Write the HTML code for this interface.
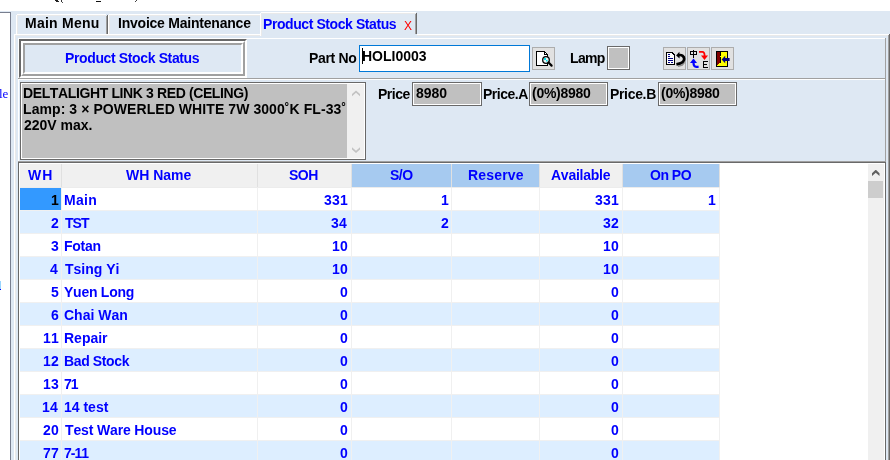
<!DOCTYPE html>
<html><head><meta charset="utf-8"><title>Product Stock Status</title>
<style>
html,body{margin:0;padding:0;}
body{width:890px;height:460px;background:#fff;position:relative;overflow:hidden;font-family:"Liberation Sans",sans-serif;}
.t{position:absolute;white-space:pre;line-height:16px;height:16px;font-kerning:none;will-change:transform;}
svg{position:absolute;overflow:visible;}
</style></head><body>

<div style="position:absolute;left:0px;top:11px;width:890px;height:1px;background:#dee8f3;"></div>
<div style="position:absolute;left:11px;top:12px;width:879px;height:448px;background:#dee8f3;"></div>
<div style="position:absolute;left:0px;top:12px;width:11px;height:1px;background:#787e8e;"></div>
<div style="position:absolute;left:10px;top:12px;width:1px;height:448px;background:#787e8e;"></div>
<div style="position:absolute;left:55px;top:0px;width:3px;height:1px;background:#222;"></div>
<div style="position:absolute;left:56px;top:1px;width:3px;height:1px;background:#222;"></div>
<div style="position:absolute;left:61px;top:0px;width:1px;height:2px;background:#333;"></div>
<div style="position:absolute;left:62px;top:2px;width:1px;height:1px;background:#555;"></div>
<div style="position:absolute;left:96px;top:1px;width:5px;height:1px;background:#111;"></div>
<div style="position:absolute;left:136px;top:0px;width:1px;height:1px;background:#444;"></div>
<div style="position:absolute;left:135px;top:1px;width:1px;height:1px;background:#444;"></div>
<div id="le" class="t" style="left:-1px;top:86px;color:#0000ff;font-size:13px;font-weight:normal;font-family:'Liberation Serif',sans-serif;letter-spacing:0px;">le</div>
<div style="position:absolute;left:0px;top:281px;width:1px;height:8px;background:#99d6ff;"></div>
<div style="position:absolute;left:0px;top:289px;width:1px;height:1px;background:#0000ff;"></div>
<div style="position:absolute;left:14px;top:34px;width:246px;height:1px;background:#ffffff;"></div>
<div style="position:absolute;left:15px;top:35px;width:245px;height:1px;background:#e9e9e9;"></div>
<div style="position:absolute;left:417px;top:34px;width:472px;height:1px;background:#ffffff;"></div>
<div style="position:absolute;left:417px;top:35px;width:471px;height:1px;background:#e9e9e9;"></div>
<div style="position:absolute;left:14px;top:34px;width:1px;height:426px;background:#ffffff;"></div>
<div style="position:absolute;left:15px;top:35px;width:1px;height:425px;background:#e9e9e9;"></div>
<div style="position:absolute;left:888px;top:35px;width:1px;height:425px;background:#a0a0a0;"></div>
<div style="position:absolute;left:889px;top:34px;width:1px;height:426px;background:#696969;"></div>
<div style="position:absolute;left:17px;top:14px;width:89px;height:1px;background:#ffffff;"></div>
<div style="position:absolute;left:17px;top:15px;width:89px;height:1px;background:#e9e9e9;"></div>
<div style="position:absolute;left:16px;top:15px;width:1px;height:19px;background:#ffffff;"></div>
<div style="position:absolute;left:17px;top:16px;width:1px;height:18px;background:#e9e9e9;"></div>
<div style="position:absolute;left:106px;top:16px;width:1px;height:18px;background:#a0a0a0;"></div>
<div style="position:absolute;left:107px;top:15px;width:1px;height:19px;background:#696969;"></div>
<div style="position:absolute;left:109px;top:14px;width:151px;height:1px;background:#ffffff;"></div>
<div style="position:absolute;left:109px;top:15px;width:151px;height:1px;background:#e9e9e9;"></div>
<div style="position:absolute;left:108px;top:15px;width:1px;height:19px;background:#ffffff;"></div>
<div style="position:absolute;left:109px;top:16px;width:1px;height:18px;background:#e9e9e9;"></div>
<div style="position:absolute;left:261px;top:12px;width:155px;height:1px;background:#ffffff;"></div>
<div style="position:absolute;left:262px;top:13px;width:153px;height:1px;background:#e9e9e9;"></div>
<div style="position:absolute;left:260px;top:13px;width:1px;height:23px;background:#ffffff;"></div>
<div style="position:absolute;left:261px;top:14px;width:1px;height:22px;background:#e9e9e9;"></div>
<div style="position:absolute;left:415px;top:14px;width:1px;height:20px;background:#a0a0a0;"></div>
<div style="position:absolute;left:416px;top:13px;width:1px;height:21px;background:#696969;"></div>
<div id="tab1" class="t" style="left:25px;top:15px;color:#000;font-size:14px;font-weight:bold;font-family:'Liberation Sans',sans-serif;letter-spacing:0.25px;">Main Menu</div>
<div id="tab2" class="t" style="left:118px;top:15px;color:#000;font-size:14px;font-weight:bold;font-family:'Liberation Sans',sans-serif;letter-spacing:-0.222px;">Invoice Maintenance</div>
<div id="tab3" class="t" style="left:263px;top:16px;color:#0000ff;font-size:14px;font-weight:bold;font-family:'Liberation Sans',sans-serif;letter-spacing:-0.421px;">Product Stock Status</div>
<div id="tabx" class="t" style="left:404px;top:18px;color:#ff0000;font-size:12px;font-weight:normal;font-family:'Liberation Sans',sans-serif;letter-spacing:0px;">X</div>
<div style="position:absolute;left:18px;top:38px;width:867px;height:1px;background:#ffffff;"></div>
<div style="position:absolute;left:18px;top:38px;width:1px;height:41px;background:#ffffff;"></div>
<div style="position:absolute;left:885px;top:38px;width:1px;height:41px;background:#a0a0a0;"></div>
<div style="position:absolute;left:18px;top:78px;width:868px;height:1px;background:#a0a0a0;"></div>
<div style="position:absolute;left:19px;top:39px;width:224px;height:35px;border-style:solid;border-width:2px;border-color:#696969 #ffffff #ffffff #696969;"></div>
<div style="position:absolute;left:21px;top:41px;width:220px;height:31px;border-style:solid;border-width:2px;border-color:#ffffff #a0a0a0 #a0a0a0 #ffffff;"></div>
<div style="position:absolute;left:23px;top:43px;width:216px;height:27px;border-style:solid;border-width:2px;border-color:#a0a0a0 #ffffff #ffffff #a0a0a0;"></div>
<div id="title" class="t" style="left:65px;top:50px;color:#0000ff;font-size:14px;font-weight:bold;font-family:'Liberation Sans',sans-serif;letter-spacing:-0.368px;">Product Stock Status</div>
<div id="partno" class="t" style="left:309px;top:50px;color:#000;font-size:14px;font-weight:bold;font-family:'Liberation Sans',sans-serif;letter-spacing:-0.333px;">Part No</div>
<div style="position:absolute;left:359px;top:45px;width:169px;height:25px;border:1px solid #0078d7;background:#fff;"></div>
<div id="holi" class="t" style="left:362px;top:48px;color:#000;font-size:14px;font-weight:bold;font-family:'Liberation Sans',sans-serif;letter-spacing:0.0px;">HOLI0003</div>
<div style="position:absolute;left:362px;top:48px;width:1px;height:16px;background:#000;"></div>
<div style="position:absolute;left:532px;top:47px;width:21px;height:21px;border:1px solid #adadad;background:#e1e1e1;"></div>
<svg style="left:532px;top:47px" width="23" height="23" viewBox="0 0 23 23" shape-rendering="crispEdges">
<path d="M4.5 4.5 H12.5 L15.5 7.5 V18.5 H4.5 Z" fill="#fff" stroke="#000" stroke-width="1"/>
<path d="M12.5 4.5 V7.5 H15.5" fill="none" stroke="#000" stroke-width="1"/>
<g shape-rendering="auto"><circle cx="14" cy="13" r="3.3" fill="#e8f4f4" stroke="#000" stroke-width="1.3"/>
<rect x="12" y="11" width="2" height="2" fill="#00e5ee"/><rect x="14" y="13" width="1.5" height="1.5" fill="#00e5ee"/>
<path d="M16.5 15.5 L19.6 18.6" stroke="#000" stroke-width="2.2" stroke-linecap="round"/></g>
</svg>
<div id="lamp" class="t" style="left:570px;top:50px;color:#000;font-size:14px;font-weight:bold;font-family:'Liberation Sans',sans-serif;letter-spacing:-0.667px;">Lamp</div>
<div style="position:absolute;left:607px;top:46px;width:19px;height:20px;border:1px solid #696969;outline:0;background:#c0c0c0;box-shadow:inset 0 0 0 1px #fff;padding:1px"></div>
<div style="position:absolute;left:663px;top:47px;width:21px;height:21px;border:1px solid #adadad;background:#e1e1e1;"></div>
<div style="position:absolute;left:687px;top:47px;width:21px;height:21px;border:1px solid #adadad;background:#e1e1e1;"></div>
<div style="position:absolute;left:711px;top:47px;width:21px;height:21px;border:1px solid #adadad;background:#e1e1e1;"></div>
<svg style="left:663px;top:47px" width="23" height="23" viewBox="0 0 23 23">
<g shape-rendering="crispEdges">
<path d="M3.5 5.5 H9 L11.5 8 V17.5 H3.5 Z" fill="#fff" stroke="#000" stroke-width="1.4"/>
<rect x="5" y="7" width="2" height="1" fill="#000080"/><rect x="5" y="9" width="2" height="1" fill="#000080"/>
<rect x="5" y="11" width="5" height="1" fill="#000080"/><rect x="5" y="13" width="5" height="1" fill="#000080"/>
<rect x="5" y="15" width="2" height="1" fill="#000080"/><rect x="8" y="15" width="2" height="1" fill="#000080"/>
</g>
<path d="M15 19.4 L19.2 18 L21.6 15.2" fill="none" stroke="#8c8c8c" stroke-width="1.5"/>
<path d="M15.5 8.2 C19 7.4 21.2 9.4 21.2 12 C21.2 15 17.5 16.6 13.4 17.4" fill="none" stroke="#000" stroke-width="2.7"/>
<path d="M13.1 8.4 L16.4 4.8 L16.6 11.4 Z" fill="#000"/>
</svg>
<svg style="left:687px;top:47px" width="23" height="23" viewBox="0 0 23 23">
<g shape-rendering="crispEdges">
<rect x="3" y="4" width="7" height="1" fill="#000"/><rect x="3" y="7" width="7" height="1" fill="#000"/>
<rect x="3" y="4" width="1" height="4" fill="#000"/><rect x="9" y="4" width="1" height="4" fill="#000"/>
<rect x="6" y="3" width="1" height="8" fill="#000"/>
<rect x="16" y="14" width="1" height="7" fill="#000"/><rect x="16" y="14" width="5" height="1" fill="#000"/>
<rect x="16" y="17" width="4" height="1" fill="#000"/><rect x="16" y="20" width="5" height="1" fill="#000"/>
</g>
<path d="M12 4.8 H15.3 C17.3 4.8 17.6 6.6 17.6 9" fill="none" stroke="#ff0000" stroke-width="1.8"/>
<path d="M14 8.6 H21 L17.5 13 Z" fill="#ff0000"/>
<path d="M11.6 19.8 H9.3 C7 19.8 6.5 18 6.5 15.5" fill="none" stroke="#0000ff" stroke-width="2.2"/>
<path d="M3 16 H10 L6.5 11.6 Z" fill="#0000ff"/>
</svg>
<svg style="left:711px;top:47px" width="23" height="23" viewBox="0 0 23 23">
<g shape-rendering="crispEdges">
<rect x="5" y="4" width="12" height="16" fill="#000"/>
<rect x="6" y="5" width="10" height="14" fill="#ffff00"/>
<path d="M6 5 H9 V15 L6 18.5 Z" fill="#800000"/>
<rect x="9" y="5" width="1" height="11" fill="#000"/>
<rect x="9" y="9" width="2" height="1" fill="#ffff00"/>
</g>
<path d="M10.6 12.5 L14.2 8.8 V11 H18.6 V14 H14.2 V16.2 Z" fill="#000080"/>
</svg>
<div style="position:absolute;left:18px;top:79px;width:867px;height:1px;background:#ffffff;"></div>
<div style="position:absolute;left:18px;top:79px;width:1px;height:83px;background:#ffffff;"></div>
<div style="position:absolute;left:885px;top:79px;width:1px;height:83px;background:#a0a0a0;"></div>
<div style="position:absolute;left:18px;top:161px;width:868px;height:1px;background:#a0a0a0;"></div>
<div style="position:absolute;left:20px;top:82px;width:342px;height:74px;border:1px solid #696969;outline:0;background:#c0c0c0;box-shadow:inset 0 0 0 1px #fff;padding:1px"></div>
<div style="position:absolute;left:347px;top:84px;width:17px;height:74px;background:#f0f0f0;"></div>
<svg style="left:347px;top:84px" width="17" height="74" viewBox="0 0 17 74">
<path d="M5 12.3 L5 10 L9 6.5 L13 10 L13 12.3 L9 8.8 Z" fill="#c2c2c2"/>
<path d="M5 63.2 L5 65.5 L9 69 L13 65.5 L13 63.2 L9 66.7 Z" fill="#c2c2c2"/>
</svg>
<div id="m1" class="t" style="left:23px;top:85px;color:#000;font-size:14px;font-weight:bold;font-family:'Liberation Sans',sans-serif;letter-spacing:-0.379px;">DELTALIGHT LINK 3 RED (CELING)</div>
<div id="m2" class="t" style="left:23px;top:101px;color:#000;font-size:14px;font-weight:bold;font-family:'Liberation Sans',sans-serif;letter-spacing:0.075px;">Lamp: 3 × POWERLED WHITE 7W 3000˚K FL-33˚</div>
<div id="m3" class="t" style="left:24px;top:117px;color:#000;font-size:14px;font-weight:bold;font-family:'Liberation Sans',sans-serif;letter-spacing:0.0px;">220V max.</div>
<div id="price" class="t" style="left:378px;top:86px;color:#000;font-size:14px;font-weight:bold;font-family:'Liberation Sans',sans-serif;letter-spacing:-0.5px;">Price</div>
<div style="position:absolute;left:412px;top:82px;width:66px;height:20px;border:1px solid #696969;outline:0;background:#c0c0c0;box-shadow:inset 0 0 0 1px #fff;padding:1px"></div>
<div id="p0" class="t" style="left:416px;top:85px;color:#000;font-size:14px;font-weight:bold;font-family:'Liberation Sans',sans-serif;letter-spacing:0.0px;">8980</div>
<div id="pa" class="t" style="left:483px;top:86px;color:#000;font-size:14px;font-weight:bold;font-family:'Liberation Sans',sans-serif;letter-spacing:-0.5px;">Price.A</div>
<div style="position:absolute;left:529px;top:82px;width:75px;height:20px;border:1px solid #696969;outline:0;background:#c0c0c0;box-shadow:inset 0 0 0 1px #fff;padding:1px"></div>
<div id="p1" class="t" style="left:532px;top:85px;color:#000;font-size:14px;font-weight:bold;font-family:'Liberation Sans',sans-serif;letter-spacing:-0.286px;">(0%)8980</div>
<div id="pb" class="t" style="left:610px;top:86px;color:#000;font-size:14px;font-weight:bold;font-family:'Liberation Sans',sans-serif;letter-spacing:-0.333px;">Price.B</div>
<div style="position:absolute;left:658px;top:82px;width:75px;height:20px;border:1px solid #696969;outline:0;background:#c0c0c0;box-shadow:inset 0 0 0 1px #fff;padding:1px"></div>
<div id="p2" class="t" style="left:661px;top:85px;color:#000;font-size:14px;font-weight:bold;font-family:'Liberation Sans',sans-serif;letter-spacing:-0.286px;">(0%)8980</div>
<div style="position:absolute;left:18px;top:162px;width:868px;height:298px;background:#696969;"></div>
<div style="position:absolute;left:19px;top:163px;width:866px;height:297px;background:#ffffff;"></div>
<div style="position:absolute;left:20px;top:164px;width:41px;height:23px;background:#f0f0f0;"></div>
<div style="position:absolute;left:61px;top:164px;width:1px;height:23px;background:#e0e0e0;"></div>
<div style="position:absolute;left:62px;top:164px;width:195px;height:23px;background:#f0f0f0;"></div>
<div style="position:absolute;left:257px;top:164px;width:1px;height:23px;background:#e0e0e0;"></div>
<div style="position:absolute;left:258px;top:164px;width:93px;height:23px;background:#f0f0f0;"></div>
<div style="position:absolute;left:351px;top:164px;width:1px;height:23px;background:#e0e0e0;"></div>
<div style="position:absolute;left:352px;top:164px;width:99px;height:23px;background:#a6caf0;"></div>
<div style="position:absolute;left:451px;top:164px;width:1px;height:23px;background:#e0e0e0;"></div>
<div style="position:absolute;left:452px;top:164px;width:87px;height:23px;background:#a6caf0;"></div>
<div style="position:absolute;left:539px;top:164px;width:1px;height:23px;background:#e0e0e0;"></div>
<div style="position:absolute;left:540px;top:164px;width:82px;height:23px;background:#f0f0f0;"></div>
<div style="position:absolute;left:622px;top:164px;width:1px;height:23px;background:#e0e0e0;"></div>
<div style="position:absolute;left:623px;top:164px;width:96px;height:23px;background:#a6caf0;"></div>
<div style="position:absolute;left:719px;top:164px;width:1px;height:23px;background:#e0e0e0;"></div>
<div style="position:absolute;left:20px;top:187px;width:700px;height:1px;background:#ececec;"></div>
<div id="h_WH" class="t" style="left:28px;top:167px;color:#0000ff;font-size:14px;font-weight:bold;font-family:'Liberation Sans',sans-serif;letter-spacing:1.0px;">WH</div>
<div id="h_WH_Name" class="t" style="left:126px;top:167px;color:#0000ff;font-size:14px;font-weight:bold;font-family:'Liberation Sans',sans-serif;letter-spacing:0.0px;">WH Name</div>
<div id="h_SOH" class="t" style="left:289px;top:167px;color:#0000ff;font-size:14px;font-weight:bold;font-family:'Liberation Sans',sans-serif;letter-spacing:-0.5px;">SOH</div>
<div id="h_S_O" class="t" style="left:390px;top:167px;color:#0000ff;font-size:14px;font-weight:bold;font-family:'Liberation Sans',sans-serif;letter-spacing:-0.5px;">S/O</div>
<div id="h_Reserve" class="t" style="left:468px;top:167px;color:#0000ff;font-size:14px;font-weight:bold;font-family:'Liberation Sans',sans-serif;letter-spacing:0.167px;">Reserve</div>
<div id="h_Available" class="t" style="left:551px;top:167px;color:#0000ff;font-size:14px;font-weight:bold;font-family:'Liberation Sans',sans-serif;letter-spacing:-0.25px;">Available</div>
<div id="h_On_PO" class="t" style="left:650px;top:167px;color:#0000ff;font-size:14px;font-weight:bold;font-family:'Liberation Sans',sans-serif;letter-spacing:-0.5px;">On PO</div>
<div style="position:absolute;left:20px;top:210px;width:700px;height:1px;background:#f0f0f0;"></div>
<div style="position:absolute;left:20px;top:188px;width:41px;height:22px;background:#3399ff;"></div>
<div id="r0c0" class="t" style="left:51px;top:192px;color:#000;font-size:14px;font-weight:bold;font-family:'Liberation Sans',sans-serif;letter-spacing:0.21px;">1</div>
<div id="r0c1" class="t" style="left:64px;top:192px;color:#0000ff;font-size:14px;font-weight:bold;font-family:'Liberation Sans',sans-serif;letter-spacing:0.333px;">Main</div>
<div id="r0c2" class="t" style="left:324px;top:192px;color:#0000ff;font-size:14px;font-weight:bold;font-family:'Liberation Sans',sans-serif;letter-spacing:0.21px;">331</div>
<div id="r0c3" class="t" style="left:441px;top:192px;color:#0000ff;font-size:14px;font-weight:bold;font-family:'Liberation Sans',sans-serif;letter-spacing:0.21px;">1</div>
<div id="r0c5" class="t" style="left:595px;top:192px;color:#0000ff;font-size:14px;font-weight:bold;font-family:'Liberation Sans',sans-serif;letter-spacing:0.21px;">331</div>
<div id="r0c6" class="t" style="left:708px;top:192px;color:#0000ff;font-size:14px;font-weight:bold;font-family:'Liberation Sans',sans-serif;letter-spacing:0.21px;">1</div>
<div style="position:absolute;left:20px;top:211px;width:700px;height:22px;background:#ddeeff;"></div>
<div style="position:absolute;left:20px;top:233px;width:700px;height:1px;background:#f0f0f0;"></div>
<div id="r1c0" class="t" style="left:51px;top:215px;color:#0000ff;font-size:14px;font-weight:bold;font-family:'Liberation Sans',sans-serif;letter-spacing:0.21px;">2</div>
<div id="r1c1" class="t" style="left:65px;top:215px;color:#0000ff;font-size:14px;font-weight:bold;font-family:'Liberation Sans',sans-serif;letter-spacing:-1.0px;">TST</div>
<div id="r1c2" class="t" style="left:331px;top:215px;color:#0000ff;font-size:14px;font-weight:bold;font-family:'Liberation Sans',sans-serif;letter-spacing:0.21px;">34</div>
<div id="r1c3" class="t" style="left:441px;top:215px;color:#0000ff;font-size:14px;font-weight:bold;font-family:'Liberation Sans',sans-serif;letter-spacing:0.21px;">2</div>
<div id="r1c5" class="t" style="left:603px;top:215px;color:#0000ff;font-size:14px;font-weight:bold;font-family:'Liberation Sans',sans-serif;letter-spacing:0.21px;">32</div>
<div style="position:absolute;left:20px;top:256px;width:700px;height:1px;background:#f0f0f0;"></div>
<div id="r2c0" class="t" style="left:51px;top:238px;color:#0000ff;font-size:14px;font-weight:bold;font-family:'Liberation Sans',sans-serif;letter-spacing:0.21px;">3</div>
<div id="r2c1" class="t" style="left:64px;top:238px;color:#0000ff;font-size:14px;font-weight:bold;font-family:'Liberation Sans',sans-serif;letter-spacing:-0.25px;">Fotan</div>
<div id="r2c2" class="t" style="left:332px;top:238px;color:#0000ff;font-size:14px;font-weight:bold;font-family:'Liberation Sans',sans-serif;letter-spacing:0.21px;">10</div>
<div id="r2c5" class="t" style="left:603px;top:238px;color:#0000ff;font-size:14px;font-weight:bold;font-family:'Liberation Sans',sans-serif;letter-spacing:0.21px;">10</div>
<div style="position:absolute;left:20px;top:257px;width:700px;height:22px;background:#ddeeff;"></div>
<div style="position:absolute;left:20px;top:279px;width:700px;height:1px;background:#f0f0f0;"></div>
<div id="r3c0" class="t" style="left:50px;top:261px;color:#0000ff;font-size:14px;font-weight:bold;font-family:'Liberation Sans',sans-serif;letter-spacing:0.21px;">4</div>
<div id="r3c1" class="t" style="left:65px;top:261px;color:#0000ff;font-size:14px;font-weight:bold;font-family:'Liberation Sans',sans-serif;letter-spacing:0.0px;">Tsing Yi</div>
<div id="r3c2" class="t" style="left:332px;top:261px;color:#0000ff;font-size:14px;font-weight:bold;font-family:'Liberation Sans',sans-serif;letter-spacing:0.21px;">10</div>
<div id="r3c5" class="t" style="left:603px;top:261px;color:#0000ff;font-size:14px;font-weight:bold;font-family:'Liberation Sans',sans-serif;letter-spacing:0.21px;">10</div>
<div style="position:absolute;left:20px;top:302px;width:700px;height:1px;background:#f0f0f0;"></div>
<div id="r4c0" class="t" style="left:51px;top:284px;color:#0000ff;font-size:14px;font-weight:bold;font-family:'Liberation Sans',sans-serif;letter-spacing:0.21px;">5</div>
<div id="r4c1" class="t" style="left:64px;top:284px;color:#0000ff;font-size:14px;font-weight:bold;font-family:'Liberation Sans',sans-serif;letter-spacing:-0.25px;">Yuen Long</div>
<div id="r4c2" class="t" style="left:340px;top:284px;color:#0000ff;font-size:14px;font-weight:bold;font-family:'Liberation Sans',sans-serif;letter-spacing:0.21px;">0</div>
<div id="r4c5" class="t" style="left:611px;top:284px;color:#0000ff;font-size:14px;font-weight:bold;font-family:'Liberation Sans',sans-serif;letter-spacing:0.21px;">0</div>
<div style="position:absolute;left:20px;top:303px;width:700px;height:22px;background:#ddeeff;"></div>
<div style="position:absolute;left:20px;top:325px;width:700px;height:1px;background:#f0f0f0;"></div>
<div id="r5c0" class="t" style="left:51px;top:307px;color:#0000ff;font-size:14px;font-weight:bold;font-family:'Liberation Sans',sans-serif;letter-spacing:0.21px;">6</div>
<div id="r5c1" class="t" style="left:64px;top:307px;color:#0000ff;font-size:14px;font-weight:bold;font-family:'Liberation Sans',sans-serif;letter-spacing:0.0px;">Chai Wan</div>
<div id="r5c2" class="t" style="left:340px;top:307px;color:#0000ff;font-size:14px;font-weight:bold;font-family:'Liberation Sans',sans-serif;letter-spacing:0.21px;">0</div>
<div id="r5c5" class="t" style="left:611px;top:307px;color:#0000ff;font-size:14px;font-weight:bold;font-family:'Liberation Sans',sans-serif;letter-spacing:0.21px;">0</div>
<div style="position:absolute;left:20px;top:348px;width:700px;height:1px;background:#f0f0f0;"></div>
<div id="r6c0" class="t" style="left:43px;top:330px;color:#0000ff;font-size:14px;font-weight:bold;font-family:'Liberation Sans',sans-serif;letter-spacing:0.21px;">11</div>
<div id="r6c1" class="t" style="left:64px;top:330px;color:#0000ff;font-size:14px;font-weight:bold;font-family:'Liberation Sans',sans-serif;letter-spacing:0.0px;">Repair</div>
<div id="r6c2" class="t" style="left:340px;top:330px;color:#0000ff;font-size:14px;font-weight:bold;font-family:'Liberation Sans',sans-serif;letter-spacing:0.21px;">0</div>
<div id="r6c5" class="t" style="left:611px;top:330px;color:#0000ff;font-size:14px;font-weight:bold;font-family:'Liberation Sans',sans-serif;letter-spacing:0.21px;">0</div>
<div style="position:absolute;left:20px;top:349px;width:700px;height:22px;background:#ddeeff;"></div>
<div style="position:absolute;left:20px;top:371px;width:700px;height:1px;background:#f0f0f0;"></div>
<div id="r7c0" class="t" style="left:43px;top:353px;color:#0000ff;font-size:14px;font-weight:bold;font-family:'Liberation Sans',sans-serif;letter-spacing:0.21px;">12</div>
<div id="r7c1" class="t" style="left:64px;top:353px;color:#0000ff;font-size:14px;font-weight:bold;font-family:'Liberation Sans',sans-serif;letter-spacing:-0.375px;">Bad Stock</div>
<div id="r7c2" class="t" style="left:340px;top:353px;color:#0000ff;font-size:14px;font-weight:bold;font-family:'Liberation Sans',sans-serif;letter-spacing:0.21px;">0</div>
<div id="r7c5" class="t" style="left:611px;top:353px;color:#0000ff;font-size:14px;font-weight:bold;font-family:'Liberation Sans',sans-serif;letter-spacing:0.21px;">0</div>
<div style="position:absolute;left:20px;top:394px;width:700px;height:1px;background:#f0f0f0;"></div>
<div id="r8c0" class="t" style="left:43px;top:376px;color:#0000ff;font-size:14px;font-weight:bold;font-family:'Liberation Sans',sans-serif;letter-spacing:0.21px;">13</div>
<div id="r8c1" class="t" style="left:64px;top:376px;color:#0000ff;font-size:14px;font-weight:bold;font-family:'Liberation Sans',sans-serif;letter-spacing:-1.0px;">71</div>
<div id="r8c2" class="t" style="left:340px;top:376px;color:#0000ff;font-size:14px;font-weight:bold;font-family:'Liberation Sans',sans-serif;letter-spacing:0.21px;">0</div>
<div id="r8c5" class="t" style="left:611px;top:376px;color:#0000ff;font-size:14px;font-weight:bold;font-family:'Liberation Sans',sans-serif;letter-spacing:0.21px;">0</div>
<div style="position:absolute;left:20px;top:395px;width:700px;height:22px;background:#ddeeff;"></div>
<div style="position:absolute;left:20px;top:417px;width:700px;height:1px;background:#f0f0f0;"></div>
<div id="r9c0" class="t" style="left:42px;top:399px;color:#0000ff;font-size:14px;font-weight:bold;font-family:'Liberation Sans',sans-serif;letter-spacing:0.21px;">14</div>
<div id="r9c1" class="t" style="left:64px;top:399px;color:#0000ff;font-size:14px;font-weight:bold;font-family:'Liberation Sans',sans-serif;letter-spacing:0.0px;">14 test</div>
<div id="r9c2" class="t" style="left:340px;top:399px;color:#0000ff;font-size:14px;font-weight:bold;font-family:'Liberation Sans',sans-serif;letter-spacing:0.21px;">0</div>
<div id="r9c5" class="t" style="left:611px;top:399px;color:#0000ff;font-size:14px;font-weight:bold;font-family:'Liberation Sans',sans-serif;letter-spacing:0.21px;">0</div>
<div style="position:absolute;left:20px;top:440px;width:700px;height:1px;background:#f0f0f0;"></div>
<div id="r10c0" class="t" style="left:43px;top:422px;color:#0000ff;font-size:14px;font-weight:bold;font-family:'Liberation Sans',sans-serif;letter-spacing:0.21px;">20</div>
<div id="r10c1" class="t" style="left:65px;top:422px;color:#0000ff;font-size:14px;font-weight:bold;font-family:'Liberation Sans',sans-serif;letter-spacing:-0.143px;">Test Ware House</div>
<div id="r10c2" class="t" style="left:340px;top:422px;color:#0000ff;font-size:14px;font-weight:bold;font-family:'Liberation Sans',sans-serif;letter-spacing:0.21px;">0</div>
<div id="r10c5" class="t" style="left:611px;top:422px;color:#0000ff;font-size:14px;font-weight:bold;font-family:'Liberation Sans',sans-serif;letter-spacing:0.21px;">0</div>
<div style="position:absolute;left:20px;top:441px;width:700px;height:22px;background:#ddeeff;"></div>
<div style="position:absolute;left:20px;top:463px;width:700px;height:1px;background:#f0f0f0;"></div>
<div id="r11c0" class="t" style="left:43px;top:445px;color:#0000ff;font-size:14px;font-weight:bold;font-family:'Liberation Sans',sans-serif;letter-spacing:0.21px;">77</div>
<div id="r11c1" class="t" style="left:64px;top:445px;color:#0000ff;font-size:14px;font-weight:bold;font-family:'Liberation Sans',sans-serif;letter-spacing:-1.0px;">7-11</div>
<div id="r11c2" class="t" style="left:340px;top:445px;color:#0000ff;font-size:14px;font-weight:bold;font-family:'Liberation Sans',sans-serif;letter-spacing:0.21px;">0</div>
<div id="r11c5" class="t" style="left:611px;top:445px;color:#0000ff;font-size:14px;font-weight:bold;font-family:'Liberation Sans',sans-serif;letter-spacing:0.21px;">0</div>
<div style="position:absolute;left:61px;top:188px;width:1px;height:272px;background:#f0f0f0;"></div>
<div style="position:absolute;left:257px;top:188px;width:1px;height:272px;background:#f0f0f0;"></div>
<div style="position:absolute;left:351px;top:188px;width:1px;height:272px;background:#f0f0f0;"></div>
<div style="position:absolute;left:451px;top:188px;width:1px;height:272px;background:#f0f0f0;"></div>
<div style="position:absolute;left:539px;top:188px;width:1px;height:272px;background:#f0f0f0;"></div>
<div style="position:absolute;left:622px;top:188px;width:1px;height:272px;background:#f0f0f0;"></div>
<div style="position:absolute;left:719px;top:188px;width:1px;height:272px;background:#f0f0f0;"></div>
<div style="position:absolute;left:868px;top:164px;width:16px;height:296px;background:#f0f0f0;"></div>
<div style="position:absolute;left:868px;top:181px;width:15px;height:17px;background:#cdcdcd;"></div>
<svg style="left:868px;top:164px" width="16" height="17" viewBox="0 0 16 17">
<path d="M4 12 L4 9.3 L7.4 5.9 L8.1 5.9 L11.5 9.3 L11.5 12 L7.75 8.7 Z" fill="#606060"/></svg>
</body></html>
